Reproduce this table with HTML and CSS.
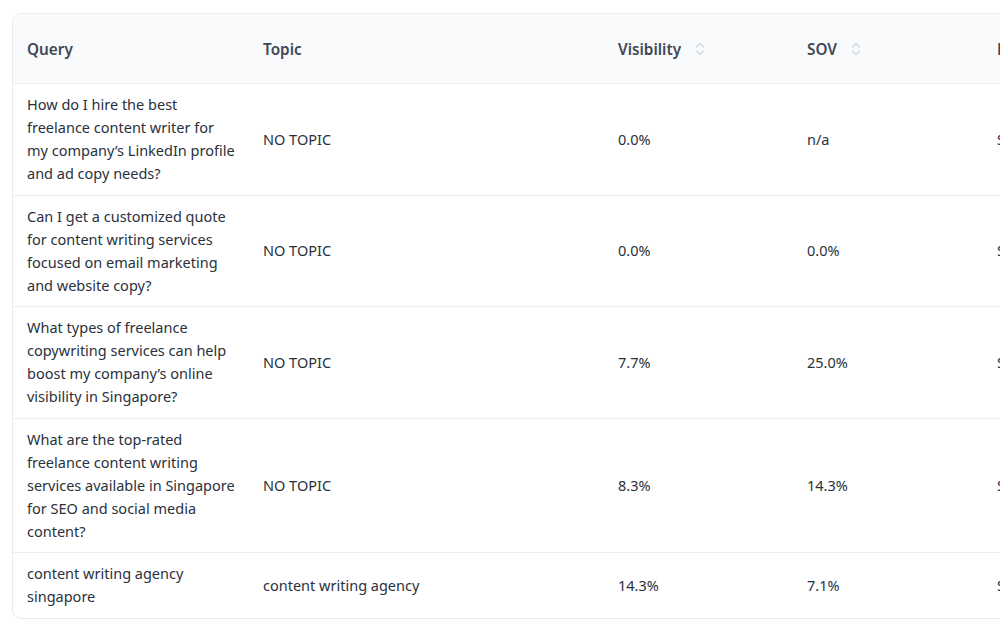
FILE: index.html
```html
<!DOCTYPE html>
<html lang="en">
<head>
<meta charset="utf-8">
<title>Queries</title>
<link rel="stylesheet" href="styles.css">
</head>
<body>
<div class="page">
  <div class="card">
    <table class="grid">
      <colgroup>
        <col class="c-query"><col class="c-topic"><col class="c-vis"><col class="c-sov"><col class="c-region"><col class="c-extra">
      </colgroup>
      <thead>
        <tr>
          <th>Query</th>
          <th>Topic</th>
          <th><span class="sortable">Visibility<svg class="sort" viewBox="0 0 10 16" width="10" height="16"><path d="M1.5 6 L5 2.5 L8.5 6 M1.5 10 L5 13.5 L8.5 10" fill="none" stroke="currentColor" stroke-width="1.3" stroke-linecap="round" stroke-linejoin="round"/></svg></span></th>
          <th><span class="sortable">SOV<svg class="sort" viewBox="0 0 10 16" width="10" height="16"><path d="M1.5 6 L5 2.5 L8.5 6 M1.5 10 L5 13.5 L8.5 10" fill="none" stroke="currentColor" stroke-width="1.3" stroke-linecap="round" stroke-linejoin="round"/></svg></span></th>
          <th>Region</th>
          <th></th>
        </tr>
      </thead>
      <tbody>
        <tr>
          <td><div class="q">How do I hire the best freelance content writer for my company’s LinkedIn profile and ad copy needs?</div></td>
          <td>NO TOPIC</td>
          <td>0.0%</td>
          <td>n/a</td>
          <td>Singapore</td>
          <td></td>
        </tr>
        <tr>
          <td><div class="q">Can I get a customized quote for content writing services focused on email marketing and website copy?</div></td>
          <td>NO TOPIC</td>
          <td>0.0%</td>
          <td>0.0%</td>
          <td>Singapore</td>
          <td></td>
        </tr>
        <tr>
          <td><div class="q">What types of freelance copywriting services can help boost my company’s online visibility in Singapore?</div></td>
          <td>NO TOPIC</td>
          <td>7.7%</td>
          <td>25.0%</td>
          <td>Singapore</td>
          <td></td>
        </tr>
        <tr>
          <td><div class="q">What are the top-rated freelance content writing services available in Singapore for SEO and social media content?</div></td>
          <td>NO TOPIC</td>
          <td>8.3%</td>
          <td>14.3%</td>
          <td>Singapore</td>
          <td></td>
        </tr>
        <tr>
          <td><div class="q">content writing agency singapore</div></td>
          <td>content writing agency</td>
          <td>14.3%</td>
          <td>7.1%</td>
          <td>Singapore</td>
          <td></td>
        </tr>
      </tbody>
    </table>
  </div>
</div>
</body>
</html>
```

FILE: styles.css
```css
html, body {
  margin: 0;
  padding: 0;
  background: #ffffff;
  overflow: hidden;
}
body {
  font-family: "Noto Sans", "Open Sans", sans-serif;
  color: #1f2937;
}
.page {
  padding: 13px 0 0 12px;
  width: 1400px;
}
.card {
  display: inline-block;
  border: 1px solid #e9ebee;
  border-radius: 9px;
  overflow: hidden;
  background: #fff;
}
.grid {
  border-collapse: collapse;
  table-layout: fixed;
  width: 1250px;
}
.c-query { width: 236px; }
.c-topic { width: 355px; }
.c-vis { width: 189px; }
.c-sov { width: 190px; }
.c-region { width: 160px; }
.c-extra { width: 120px; }
thead th {
  background: #f9fafb;
  height: 69px;
  padding: 0 14px;
  text-align: left;
  font-size: 15.3px;
  font-weight: 600;
  color: #3f4856;
  border-bottom: 1px solid #eceef1;
}
.sortable {
  display: inline-flex;
  align-items: center;
  gap: 14px;
}
.sort {
  color: #d4d8de;
  display: block;
}
tbody td {
  padding: 9px 14px 9.5px;
  font-size: 14.5px;
  line-height: 23px;
  color: #2a313c;
  vertical-align: middle;
  border-bottom: 1px solid #eceef1;
}
tbody tr:last-child td {
  border-bottom: none;
}
.q {
  width: 208px;
}
```
